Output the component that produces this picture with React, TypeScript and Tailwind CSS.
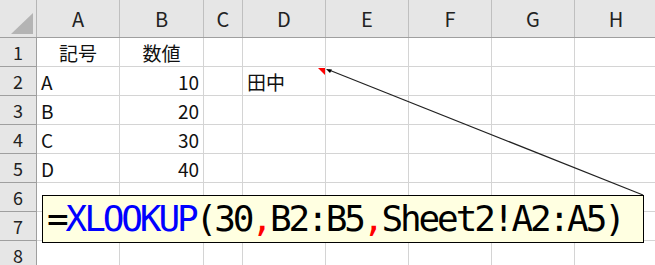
import React from "react";

const COLS = ["A", "B", "C", "D", "E", "F", "G", "H"];
const COL_W = [83, 84, 39, 83, 83, 83, 83, 83];
const ROW_H = 29;

type Cell = { text: string; align?: "left" | "right" | "center" };

// sheet contents keyed by "A1" style address
const cells: Record<string, Cell> = {
  A1: { text: "記号", align: "center" },
  B1: { text: "数値", align: "center" },
  A2: { text: "A" },
  B2: { text: "10", align: "right" },
  A3: { text: "B" },
  B3: { text: "20", align: "right" },
  A4: { text: "C" },
  B4: { text: "30", align: "right" },
  A5: { text: "D" },
  B5: { text: "40", align: "right" },
  D2: { text: "田中" },
};

const font = { fontFamily: '"Noto Sans CJK JP", "Noto Sans", sans-serif' };

function HeaderRow() {
  return (
    <div className="flex h-[38px] bg-[#e6e6e6] border-b border-[#9f9f9f]">
      <div className="relative w-[37px] shrink-0 border-r border-[#b5b5b5]">
        {/* select-all corner */}
        <svg className="absolute left-0 top-0" width="36" height="37">
          <polygon points="11,34 33,13 33,34" fill="#b4b4b4" />
        </svg>
      </div>
      {COLS.map((c, i) => (
        <div
          key={c}
          style={{ width: COL_W[i] }}
          className="shrink-0 flex items-center justify-center border-r border-[#bfbfbf] text-[20px] text-[#222]"
        >
          {c}
        </div>
      ))}
    </div>
  );
}

function Row({ n }: { n: number }) {
  return (
    <div className="flex" style={{ height: ROW_H }}>
      <div className="w-[37px] shrink-0 flex items-center justify-center bg-[#e6e6e6] border-r border-b border-[#9f9f9f] text-[18px] text-[#222]">
        {n}
      </div>
      {COLS.map((c, i) => {
        const cell = cells[`${c}${n}`];
        const justify =
          cell?.align === "right"
            ? "justify-end"
            : cell?.align === "center"
              ? "justify-center"
              : "justify-start";
        return (
          <div
            key={c}
            style={{ width: COL_W[i] }}
            className={`shrink-0 flex items-center px-[4px] border-r border-b border-[#d4d4d4] text-[19px] text-[#111] ${justify}`}
          >
            {cell?.text}
          </div>
        );
      })}
    </div>
  );
}

export default function App() {
  return (
    <div
      className="relative w-[655px] h-[265px] overflow-hidden bg-white leading-none"
      style={font}
    >
      <HeaderRow />
      {[1, 2, 3, 4, 5, 6, 7, 8].map((n) => (
        <Row key={n} n={n} />
      ))}

      {/* comment marker + callout arrow */}
      <svg className="absolute left-0 top-0 pointer-events-none" width="655" height="265">
        <polygon points="318,68 325,68 325,75" fill="#ff0000" />
        <line x1="643" y1="195" x2="329" y2="70" stroke="#222" strokeWidth="1.2" />
        <polygon points="326,69 332,69.5 330,73" fill="#000" />
      </svg>

      {/* formula callout */}
      <div className="absolute left-[42px] top-[195px] w-[602px] h-[48px] bg-[#ffffe1] border border-black flex items-center pl-[4px]">
        <span
          className="text-[36px] tracking-[-3.1px] text-black whitespace-nowrap"
          style={{ fontFamily: '"DejaVu Sans Mono", monospace' }}
        >
          =<span className="text-[#0000ff]">XLOOKUP</span>(30
          <span className="text-[#ff0000]">,</span>B2:B5
          <span className="text-[#ff0000]">,</span>Sheet2!A2:A5)
        </span>
      </div>
    </div>
  );
}
